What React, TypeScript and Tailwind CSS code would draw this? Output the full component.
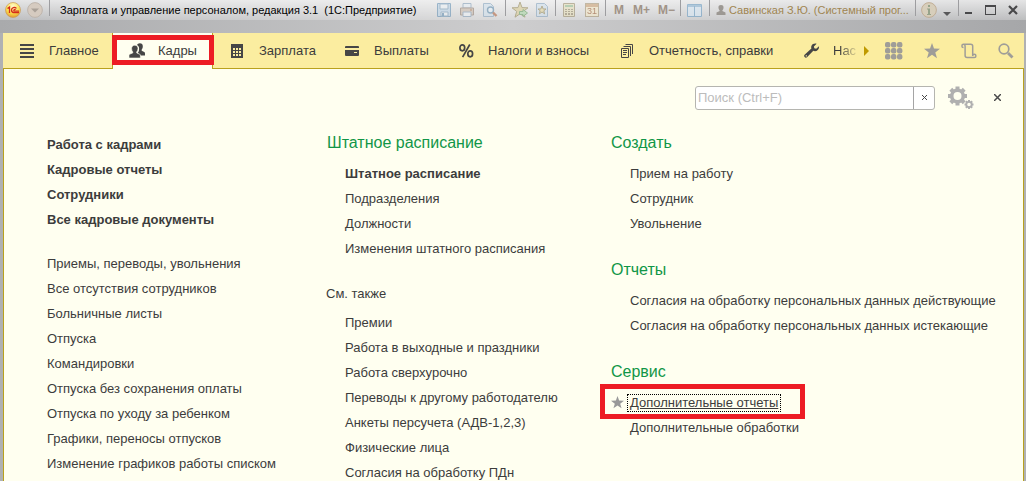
import React from "react";

type IconProps = { children: React.ReactNode; w?: number; h?: number; className?: string };

function Icon({ children, w = 16, h = 16, className = "" }: IconProps) {
  return (
    <svg width={w} height={h} viewBox={`0 0 ${w} ${h}`} fill="currentColor" aria-hidden="true" className={`block shrink-0 ${className}`}>
      {children}
    </svg>
  );
}

const STAR = "M8 0 L10 5.6 L16 5.8 L11.3 9.4 L13 15.2 L8 11.8 L3 15.2 L4.7 9.4 L0 5.8 L6 5.6 Z";

const menuIcon = (
  <Icon>
    <path d="M0 1h14v2H0zM0 5h14v2H0zM0 9h14v2H0zM0 13h14v2H0z" />
  </Icon>
);
const peopleIcon = (
  <Icon>
    <path d="M10.800 0.200c2 0 3 1.300 3 3 0 1.700-.5 2.700-1.100 3.400v1.200l2.500 1.100c.6.300.8.8.8 1.500v2h-4.200c-.3-1-1-1.500-2.200-2l-1-.5c1-1 1.500-2.200 1.500-4.200 0-1.700-.7-3-2-3.700.4-1.100 1.300-1.800 2.700-1.800z" />
    <path d="M5.800 2.200c2.100 0 3.200 1.400 3.200 3.300 0 1.600-.6 2.700-1.300 3.400v1l2.700 1.200c.7.300 1 .8 1 1.500V15H0v-2.400c0-.7.300-1.200 1-1.500l2.800-1.200v-1C3.100 8.200 2.600 7.100 2.600 5.500c0-1.900 1.100-3.300 3.200-3.300z" stroke="#fffff0" strokeWidth="0.600" />
  </Icon>
);
const calcIcon = (
  <Icon>
    <path fillRule="evenodd" d="M1 1h12v14H1zM3 5v2h2V5zM6 5v2h2V5zM9 5v2h2V5zM3 8v2h2V8zM6 8v2h2V8zM9 8v2h2V8zM3 11v2h2v-2zM6 11v2h2v-2zM9 11v2h2v-2z" />
  </Icon>
);
const cardIcon = (
  <Icon>
    <path fillRule="evenodd" d="M1 3h12q1 0 1 1v1H0V4q0-1 1-1zM0 7h14v5q0 1-1 1H1q-1 0-1-1zM9 9v1h3V9z" />
  </Icon>
);
const percentIcon = (
  <Icon>
    <g fill="none" stroke="currentColor" strokeWidth="1.700">
      <ellipse cx="3.300" cy="4.800" rx="2.400" ry="3" />
      <ellipse cx="11.200" cy="10.800" rx="2.400" ry="3" />
      <path d="M10.800 1.500 3.600 14.200" />
    </g>
  </Icon>
);
const docsIcon = (
  <Icon>
    <path d="M1.500 5.500h7v9h-7zM3.500 3.500h7V13M5.500 1.500h7V11M3 7.500h4M3 9.500h4M3 11.500h3" fill="none" stroke="currentColor" />
  </Icon>
);
const wrenchIcon = (
  <Icon>
    <path d="M15 3.200 12.200 5.800 10.300 5.200 9.900 3.400 12.600.7C10.600 0 8.300.9 7.500 2.700c-.4 1-.4 1.900-.1 2.800L.6 11.700c-1.500 1.400.8 4 2.400 2.500L9.300 7.800c2.700 1.200 6.200-.8 5.700-4.600zM1.700 12.300h1.200v1.200H1.700z" fillRule="evenodd" />
  </Icon>
);

const tabs = [
  { label: "Главное", icon: menuIcon, width: "w-[109px]" },
  { label: "Кадры", icon: peopleIcon, width: "w-[101px]" },
  { label: "Зарплата", icon: calcIcon, width: "w-[115px]" },
  { label: "Выплаты", icon: cardIcon, width: "w-[114px]" },
  { label: "Налоги и взносы", icon: percentIcon, width: "w-[161px]" },
  { label: "Отчетность, справки", icon: docsIcon, width: "w-[184px]" },
];

function Sep() {
  return <span className="h-4 w-px shrink-0 self-start bg-[#9d9da0]" />;
}

function ToolButton({ label, children, className = "" }: { label: string; children: React.ReactNode; className?: string }) {
  return (
    <button type="button" aria-label={label} className={`flex shrink-0 items-center justify-center ${className}`}>
      {children}
    </button>
  );
}

function TitleBar() {
  return (
    <header className="flex h-[33px] shrink-0 flex-col bg-linear-to-r from-[#a9aaac] via-[#cdcdce] to-[#a6a7a9]">
      <div className="flex h-5 items-center bg-linear-to-b from-white/70 to-white/25 pr-2 pl-[5px]">
        <ToolButton label="1С" className="w-4">
          <Icon>
            <defs>
              <radialGradient id="logo" cx="50%" cy="25%" r="75%">
                <stop offset="0" stopColor="#fffbd0" />
                <stop offset="0.600" stopColor="#fbe04d" />
                <stop offset="1" stopColor="#e49a31" />
              </radialGradient>
            </defs>
            <circle cx="8" cy="8" r="7.500" fill="url(#logo)" stroke="#c99a5c" strokeWidth="0.700" />
            <path d="M2.500 6.500 4.500 5V11M11.500 6.400C9.500 4.500 6.500 5.500 6.500 8c0 2 1.500 2.700 3 2.700h4.500M10.700 7.500C9 6.800 8.200 9 9.500 9.100H14" fill="none" stroke="#d42c1c" strokeWidth="1.300" />
          </Icon>
        </ToolButton>
        <ToolButton label="Меню" className="ml-[6px] w-4">
          <Icon>
            <circle cx="8" cy="8" r="7.400" fill="#d6cbc0" stroke="#b9aea5" strokeWidth="0.800" />
            <path d="M4 6.500h8L8 10.500z" fill="#aaa198" />
          </Icon>
        </ToolButton>
        <span className="ml-[6px] flex h-full"><Sep /></span>
        <h1 className="ml-[10px] flex-1 truncate text-[11px] whitespace-pre text-black">Зарплата и управление персоналом, редакция 3.1  (1С:Предприятие)</h1>
        <div className="flex h-full items-center gap-[7px] pr-[7px]">
          <ToolButton label="Сохранить">
            <Icon className="opacity-55">
              <path d="M1.500 1.500h13v13h-13z" fill="#b9d3e8" stroke="#5a8ab0" />
              <path d="M4 2h8v5H4zM5 10h7v4H5z" fill="#eef4f8" stroke="#7599b6" />
              <path d="M6 11h2v3H6z" fill="#5a8ab0" />
            </Icon>
          </ToolButton>
          <ToolButton label="Печать">
            <Icon className="opacity-55">
              <path d="M4 1.500h8V6H4z" fill="#e4edf5" stroke="#7e9ab5" />
              <path d="M1.500 6h13v7h-13z" fill="#c9b8a8" stroke="#8e7b6c" />
              <path d="M4 10h8v4.500H4z" fill="#eef3f8" stroke="#7e9ab5" />
              <path d="M11 7.500h2v1h-2z" fill="#a05c30" />
            </Icon>
          </ToolButton>
          <ToolButton label="Предварительный просмотр">
            <Icon className="opacity-55">
              <path d="M1.500 1.500h7l3 3v10h-10z" fill="#cfe0ee" stroke="#7e9fbb" />
              <circle cx="8.500" cy="8" r="3" fill="#e8f3fb" stroke="#5686a8" strokeWidth="1.400" />
              <path d="m11 10.500 3.500 3.500" stroke="#b05e36" strokeWidth="2.400" />
            </Icon>
          </ToolButton>
        </div>
        <Sep />
        <div className="flex h-full items-center gap-[7px] px-[6px]">
          <ToolButton label="Добавить в избранное">
            <Icon className="opacity-55">
              <path d={STAR} fill="#d8c98c" stroke="#8c8050" />
              <path d="M7.500 9.500H11V7.500l4.500 3.500L11 14.500v-2H7.500z" fill="#a5d5a0" stroke="#5a9a58" />
            </Icon>
          </ToolButton>
          <ToolButton label="Избранное">
            <Icon w={14} className="opacity-55">
              <path d="M1.500 1.500h8l3 3v10h-11z" fill="#cfe0ee" stroke="#7e9fbb" />
              <path d="m7 4 1.200 3H11L8.800 8.800l.8 3L7 10l-2.600 1.800.8-3L3 7h2.800z" fill="#e5d79b" stroke="#8c8050" />
            </Icon>
          </ToolButton>
        </div>
        <Sep />
        <div className="flex h-full items-center gap-[9px] px-[6px]">
          <ToolButton label="Калькулятор">
            <Icon w={14} className="opacity-55">
              <path d="M1.500 1.500h11v13h-11z" fill="#e8dfb5" stroke="#948762" />
              <path d="M3 3h8v2H3z" fill="#8fba89" />
              <path d="M3 7h2v1H3zM6 7h2v1H6zM9 7h2v1H9zM3 9h2v1H3zM6 9h2v1H6zM9 9h2v1H9zM3 11h2v2H3zM6 11h2v2H6zM9 11h2v2H9z" fill="#8f8260" />
            </Icon>
          </ToolButton>
          <ToolButton label="Календарь" className="opacity-55">
            <span className="flex h-[14px] w-[14px] flex-col border border-[#a2906c] bg-[#f6e9c4]">
              <span className="h-[3px] bg-[#c99b6a]" />
              <span className="text-center font-['Liberation_Sans'] text-[9px] leading-[9px] text-[#914c20]">31</span>
            </span>
          </ToolButton>
        </div>
        <Sep />
        <div className="flex h-full items-center gap-2 px-[7px] text-[12px] font-bold text-[#a19387]">
          <button type="button" className="w-[12px]">M</button>
          <button type="button" className="w-[17px]">M+</button>
          <button type="button" className="w-[15px]">M−</button>
        </div>
        <Sep />
        <ToolButton label="Панели" className="mx-[6px]">
          <Icon className="opacity-60">
            <path d="M.5 2.500h14v12H.5z" fill="#d9e9f6" stroke="#6a9cc2" />
            <path d="M1 3h13v2H1z" fill="#8db6d5" />
            <path d="M7.500 4v10" stroke="#6a9cc2" />
          </Icon>
        </ToolButton>
        <Sep />
        <button type="button" className="ml-[6px] flex shrink-0 items-center gap-[3px] text-[11px] text-[#a08550]">
          <Icon w={10} h={12} className="text-[#9c9893]">
            <path d="M5 1c2 0 2.800 1.300 2.500 3C7.300 5.500 6.500 6 6.300 7L9.500 8.500V11H.5V8.500L3.700 7C3.500 6 2.700 5.500 2.500 4 2.200 2.300 3 1 5 1z" />
          </Icon>
          <span className="w-[186px] text-left whitespace-nowrap">Савинская З.Ю. (Системный прог...</span>
        </button>
        <Sep />
        <ToolButton label="Справка" className="ml-[5px]">
          <Icon>
            <circle cx="8" cy="8" r="7.400" fill="#d7cebb" stroke="#bba58a" strokeWidth="0.800" />
            <path d="M7 3h2v2H7zM6 6.500h3V12h1v1H6v-1h1V7.500H6z" fill="#96a38a" />
          </Icon>
        </ToolButton>
        <ToolButton label="Ещё" className="ml-[6px]">
          <Icon w={8} className="text-[#58585a]">
            <path d="M0 10h8L4 14z" />
          </Icon>
        </ToolButton>
        <span className="ml-[7px] flex h-full"><Sep /></span>
        <div className="ml-[6px] flex items-center gap-3 text-[#48484a]">
          <ToolButton label="Свернуть"><Icon w={8}><path d="M0 10h7v2H0z" /></Icon></ToolButton>
          <ToolButton label="Развернуть"><Icon w={11}><path fillRule="evenodd" d="M0 3h11v10H0zM1 5v7h9V5z" /></Icon></ToolButton>
          <ToolButton label="Закрыть"><Icon w={10}><path d="m1 4 8 8M9 4l-8 8" stroke="currentColor" strokeWidth="2.200" /></Icon></ToolButton>
        </div>
      </div>
    </header>
  );
}

function Sections() {
  return (
    <nav className="flex h-9 shrink-0 items-stretch bg-[#fbeda0] text-[13px] text-[#3c3c3c] shadow-[inset_0_-1px_0_#b9a11d]">
      {tabs.map((t) => {
        const active = t.label === "Кадры";
        return (
          <button
            key={t.label}
            type="button"
            aria-current={active ? "page" : undefined}
            className={`relative flex shrink-0 items-center gap-[13px] pl-[17px] whitespace-nowrap ${t.width} ${active ? "bg-[#fffff0] shadow-[inset_1px_0_0_#b9a11d,inset_-1px_0_0_#b9a11d]" : ""}`}
          >
            <span className="text-[#464646]">{t.icon}</span>
            {t.label}
            {active && <span className="pointer-events-none absolute top-[2px] -right-px left-0 h-[30px] border-5 border-[#ed1c24]" />}
          </button>
        );
      })}
      <button type="button" className="flex w-[70px] shrink-0 items-center gap-[13px] pl-[17px] text-[#464646]">
        {wrenchIcon}
        <span className="bg-linear-to-r from-[#3c3c3c] from-30% to-[#3c3c3c]/15 bg-clip-text text-transparent">Нас</span>
      </button>
      <div className="flex flex-1 items-center justify-end gap-[21px] pr-[10px] text-[#9f9d98]">
        <div className="flex items-center gap-4">
          <ToolButton label="Прокрутить"><Icon w={5} h={10} className="text-[#bf9a00]"><path d="M0 0 5 5 0 10z" /></Icon></ToolButton>
          <ToolButton label="Приложения">
            <Icon w={18} h={18}>
              {[0, 6, 12].map((y) => [0, 6, 12].map((x) => <rect key={`${x}-${y}`} x={x} y={y} width="5.400" height="5.400" rx="2" />))}
            </Icon>
          </ToolButton>
        </div>
        <ToolButton label="Избранное"><Icon><path d={STAR} /></Icon></ToolButton>
        <ToolButton label="История">
          <Icon>
            <path d="M2.500 4.500a1.600 1.600 0 1 1 1.600-1.600V12.500a2 2 0 0 0 2 2h7.200a1.600 1.600 0 1 0-1.600-1.600V3.300a2 2 0 0 0-2-2H2.500" fill="none" stroke="currentColor" strokeWidth="1.500" />
          </Icon>
        </ToolButton>
        <ToolButton label="Поиск">
          <Icon>
            <circle cx="6" cy="6" r="4.800" fill="none" stroke="currentColor" strokeWidth="1.700" />
            <path d="m10 10 4.500 4.500" stroke="currentColor" strokeWidth="2.800" />
          </Icon>
        </ToolButton>
      </div>
    </nav>
  );
}

function gear(cx: number, cy: number, r: number, tooth: number, hole: number) {
  return (
    <g>
      {[0, 45, 90, 135, 180, 225, 270, 315].map((a) => (
        <rect key={a} x={cx - tooth / 2} y={cy - r} width={tooth} height={r * 0.5} transform={`rotate(${a} ${cx} ${cy})`} />
      ))}
      <circle cx={cx} cy={cy} r={(hole + r * 0.8) / 2} fill="none" stroke="currentColor" strokeWidth={r * 0.8 - hole} />
    </g>
  );
}

function Search() {
  return (
    <div className="flex h-[57px] items-center justify-end pr-[22px] text-[#b0b0b0]">
      <label className="flex h-6 w-[240px] rounded-[3px] border border-[#b5b5b0] bg-white">
        <input type="text" aria-label="Поиск" placeholder="Поиск (Ctrl+F)" className="min-w-0 flex-1 bg-transparent pl-[2px] text-[13px] text-[#333] outline-none placeholder:text-[#bcbcbc]" />
        <button type="button" aria-label="Очистить" className="flex w-[21px] items-center justify-center border-l border-[#a5a5a5] text-[#4a4a4a]">
          <Icon w={5} h={5}><path d="m0 0 5 5M5 0 0 5" stroke="currentColor" /></Icon>
        </button>
      </label>
      <button type="button" aria-label="Настройки" className="ml-[13px]">
        <Icon w={26} h={24}>
          {gear(9.5, 10, 9.5, 4, 4)}
          {gear(21, 18.5, 4.5, 2, 1.8)}
        </Icon>
      </button>
      <button type="button" aria-label="Закрыть панель" className="ml-5 text-[#4a4a4a]">
        <Icon w={7} h={7}><path d="m0 0 7 7M7 0 0 7" stroke="currentColor" strokeWidth="1.500" /></Icon>
      </button>
    </div>
  );
}

function Items({ items, bold = false }: { items: string[]; bold?: boolean }) {
  return (
    <ul>
      {items.map((t) => (
        <li key={t} className="h-[25px] leading-[25px]">
          <a href="#" className={`whitespace-nowrap ${bold ? "font-bold" : ""}`}>{t}</a>
        </li>
      ))}
    </ul>
  );
}

function Heading({ children }: { children: React.ReactNode }) {
  return <h2 className="mb-[6px] h-[25px] text-[16px] leading-[25px] text-[#119647]">{children}</h2>;
}

export default function App() {
  return (
    <div className="flex min-h-screen flex-col overflow-hidden bg-[#b0b1b3] font-['Liberation_Sans',sans-serif]">
      <TitleBar />
      <div className="mr-[2px] ml-[3px] flex flex-1 flex-col">
        <Sections />
        <main className="flex-1 border-x border-[#b9a11d] bg-[#fffff0] text-[13px] text-[#3c3c3c]">
          <Search />
          <div className="grid grid-cols-[280px_284px_1fr] pt-1 pl-[43px]">
            <section className="flex flex-col gap-[19px] pt-[2px]">
              <Items bold items={["Работа с кадрами", "Кадровые отчеты", "Сотрудники", "Все кадровые документы"]} />
              <Items
                items={[
                  "Приемы, переводы, увольнения",
                  "Все отсутствия сотрудников",
                  "Больничные листы",
                  "Отпуска",
                  "Командировки",
                  "Отпуска без сохранения оплаты",
                  "Отпуска по уходу за ребенком",
                  "Графики, переносы отпусков",
                  "Изменение графиков работы списком",
                ]}
              />
            </section>
            <section>
              <Heading>Штатное расписание</Heading>
              <div className="pl-[18px]">
                <Items bold items={["Штатное расписание"]} />
                <Items items={["Подразделения", "Должности", "Изменения штатного расписания"]} />
              </div>
              <h3 className="mt-5 mb-1 -ml-px h-[25px] leading-[25px]">См. также</h3>
              <div className="pl-[18px]">
                <Items
                  items={[
                    "Премии",
                    "Работа в выходные и праздники",
                    "Работа сверхурочно",
                    "Переводы к другому работодателю",
                    "Анкеты персучета (АДВ-1,2,3)",
                    "Физические лица",
                    "Согласия на обработку ПДн",
                  ]}
                />
              </div>
            </section>
            <section className="flex flex-col gap-[21px]">
              <div>
                <Heading>Создать</Heading>
                <div className="pl-[19px]"><Items items={["Прием на работу", "Сотрудник", "Увольнение"]} /></div>
              </div>
              <div>
                <Heading>Отчеты</Heading>
                <div className="pl-[19px]">
                  <Items items={["Согласия на обработку персональных данных действующие", "Согласия на обработку персональных данных истекающие"]} />
                </div>
              </div>
              <div>
                <Heading>Сервис</Heading>
                <div className="relative flex h-[25px] items-center">
                  <button type="button" aria-label="В избранном" className="w-4 text-[#999]">
                    <svg width="13" height="13" viewBox="0 0 16 16" fill="currentColor" aria-hidden="true"><path d={STAR} /></svg>
                  </button>
                  <a href="#" className="border border-dotted border-black px-[2px] leading-4 whitespace-nowrap underline">Дополнительные отчеты</a>
                  <span className="pointer-events-none absolute -top-[6px] -left-[11px] h-[35px] w-[205px] border-5 border-[#ed1c24]" />
                </div>
                <div className="pl-[19px]"><Items items={["Дополнительные обработки"]} /></div>
              </div>
            </section>
          </div>
        </main>
      </div>
    </div>
  );
}
